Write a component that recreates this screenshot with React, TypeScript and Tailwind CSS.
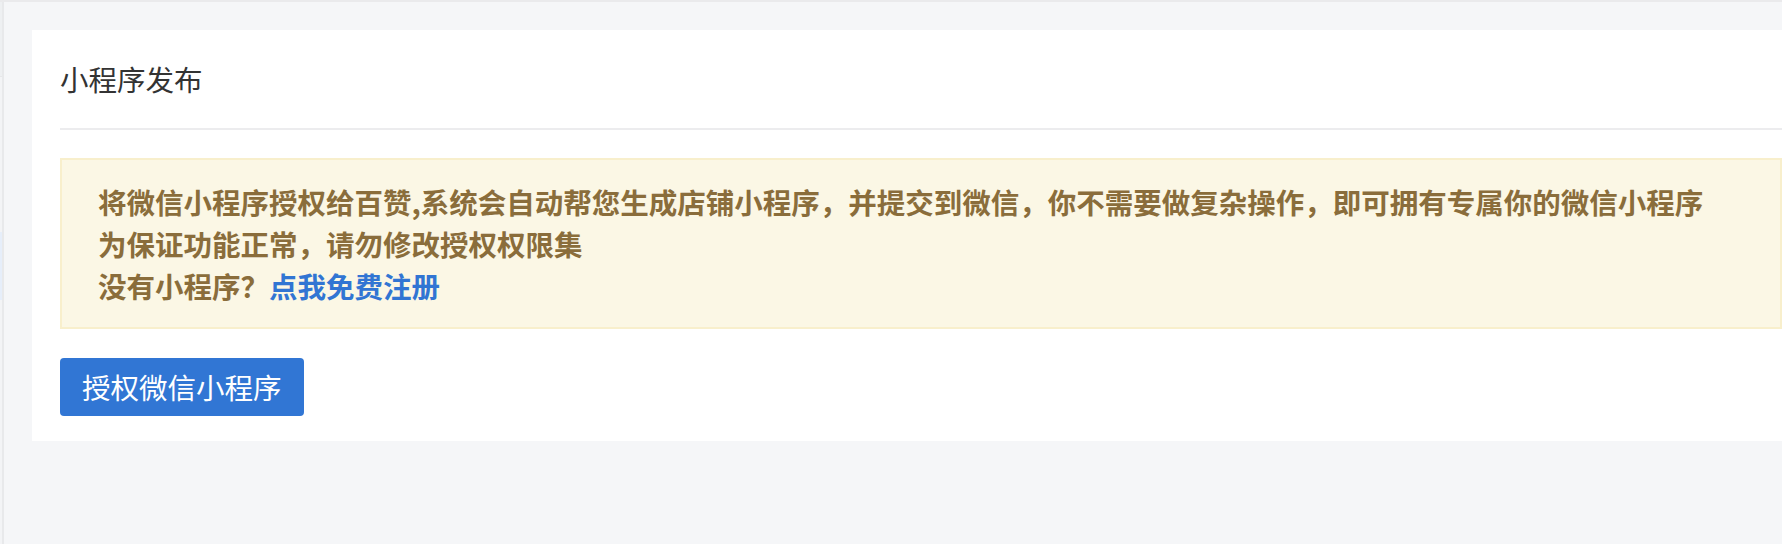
const font = { fontFamily: '"Noto Sans CJK SC", "Noto Sans", sans-serif' };

export default function App() {
  return (
    <div
      style={font}
      className="flex min-h-[544px] border-t-2 border-[#eaeaec] bg-[#f5f6f8]"
    >
      {/* clipped sidebar on the left edge */}
      <aside className="flex w-[4px] shrink-0 flex-col border-r-2 border-[#e8e9eb]">
        <div className="h-[75px] border-b border-[#e6e7e9] bg-[#eef0f2]" />
        <div className="h-[155px] bg-[#f3f4f6]" />
        <div className="h-[68px] bg-[#e6eefa]" />
        <div className="flex-1 bg-[#f3f4f6]" />
      </aside>

      <main className="min-w-0 flex-1 pt-[28px] pl-[28px]">
        <div className="bg-white pb-[25px] pl-[28px]">
          <div className="flex h-[98px] items-center">
            <h2 className="text-[28.5px] leading-[42px] font-normal text-[#333333]">小程序发布</h2>
          </div>
          <div className="h-[2px] bg-[#ececee]" />

          <div className="mt-[28px] border-2 border-[#f8efcc] bg-[#fbf7e5] pt-[21px] pb-[20px] pl-[36px] text-[28.5px] leading-[42px] font-bold whitespace-nowrap text-[#8a6d3b]">
            <p>
              将微信小程序授权给百赞,系统会自动帮您生成店铺小程序，并提交到微信，你不需要做复杂操作，即可拥有专属你的微信小程序
            </p>
            <p>为保证功能正常，请勿修改授权权限集</p>
            <p>
              没有小程序？<a className="text-[#3175d3]">点我免费注册</a>
            </p>
          </div>

          <button
            type="button"
            className="mt-[29px] h-[58px] rounded-[4px] bg-[#3176d4] px-[22px] text-[28.5px] leading-[42px] text-white"
          >
            授权微信小程序
          </button>
        </div>
      </main>
    </div>
  );
}
